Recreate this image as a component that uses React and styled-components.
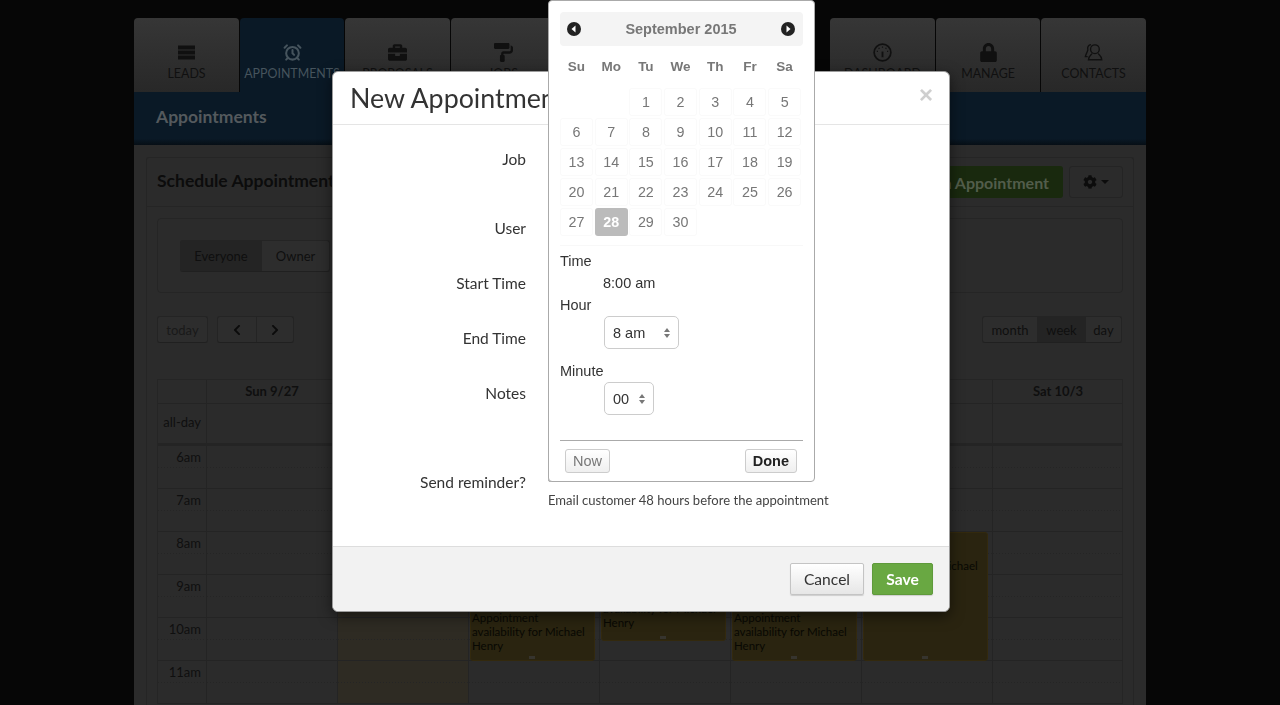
import React from 'react';
import styled, { createGlobalStyle } from 'styled-components';
import { FaBriefcase, FaPaintRoller, FaLock, FaCog, FaChevronLeft, FaChevronRight } from 'react-icons/fa';
import { LuAlarmClock } from 'react-icons/lu';

const GlobalStyle = createGlobalStyle`
  html, body {
    margin: 0;
    height: 100%;
    overflow: hidden;
    background: #060606;
    font-family: Lato, "Liberation Sans", sans-serif;
  }
  * { box-sizing: border-box; }
`;

const Shell = styled.div`
  width: 1012px;
  height: 705px;
  margin: 0 auto;
  padding-top: 18px;
  overflow: hidden;
`;

const Nav = styled.nav`
  display: flex;
  justify-content: space-between;
  height: 74px;
`;

const TabGroup = styled.div`
  display: flex;
  gap: 1px;
`;

const Tab = styled.div`
  width: 105px;
  height: 74px;
  padding-top: 25px;
  border-radius: 4px 4px 0 0;
  display: flex;
  flex-direction: column;
  align-items: center;
  gap: 4px;
  font-size: 12.4px;
  line-height: 16px;
  white-space: nowrap;
  color: ${p => (p.$active ? '#46545d' : '#101010')};
  background: ${p => (p.$active ? '#0a1926' : 'linear-gradient(#363636, #282828)')};
  &:nth-child(even) { width: 104px; }
  svg { width: 19px; height: 19px; display: block; }
`;

const Band = styled.div`
  height: 53px;
  padding: 0 22px 4px;
  display: flex;
  align-items: center;
  font-size: 17.5px;
  font-weight: 700;
  color: #54595d;
  background: linear-gradient(#0a1926 88%, #060e15);
`;

const Page = styled.div`
  height: 560px;
  padding: 12px 12px 0;
  background: #2b2b2b;
`;

const Panel = styled.div`
  height: 100%;
  border: 1px solid #252525;
  border-bottom: 0;
  border-radius: 3px 3px 0 0;
`;

const PanelHead = styled.div`
  height: 49px;
  padding: 7px 10px;
  display: flex;
  align-items: center;
  gap: 6px;
  border-bottom: 1px solid #252525;
`;

const PanelTitle = styled.h2`
  flex: 1;
  margin: 0 0 4px;
  font-size: 17.5px;
  font-weight: 700;
  color: #0c0c0c;
`;

const AddButton = styled.div`
  height: 32px;
  padding: 0 14px;
  display: flex;
  align-items: center;
  border-radius: 3px;
  font-size: 16px;
  font-weight: 700;
  color: #525d4b;
  background: #19290e;
`;

const GearButton = styled.div`
  width: 54px;
  height: 32px;
  display: flex;
  align-items: center;
  justify-content: center;
  gap: 4px;
  border: 1px solid #242424;
  border-radius: 3px;
  color: #0c0c0c;
  svg { width: 14px; height: 14px; }
`;

const Caret = styled.span`
  width: 0;
  height: 0;
  border-left: 4px solid transparent;
  border-right: 4px solid transparent;
  border-top: 4px solid #0c0c0c;
`;

const PanelBody = styled.div`
  padding: 11px 10px 0;
`;

const Well = styled.div`
  height: 75px;
  padding: 21px 22px;
  border: 1px solid #252525;
  border-radius: 4px;
`;

const Toolbar = styled.div`
  margin: 23px 1px 36px 0;
  height: 27px;
  display: flex;
  align-items: center;
  gap: 9px;
`;

const BtnGroup = styled.div`
  display: flex;
  width: fit-content;
  height: ${p => p.$height || 27}px;
  border: 1px solid #242424;
  border-bottom-color: #202020;
  border-radius: 3px;
  background: #2d2d2d;
  margin-left: ${p => (p.$push ? 'auto' : 0)};
`;

const GroupBtn = styled.div`
  width: ${p => p.$width}px;
  display: flex;
  align-items: center;
  justify-content: center;
  font-size: 13px;
  color: ${p => (p.$faded ? '#191919' : '#0f0f0f')};
  background: ${p => (p.$active ? '#242424' : 'transparent')};
  & + & { border-left: 1px solid #242424; }
  svg { width: 12px; height: 12px; color: #0b0b0b; }
`;

const Calendar = styled.div`
  width: 966px;
  border: 1px solid #252525;
  border-bottom: 0;
`;

const CalRow = styled.div`
  display: grid;
  grid-template-columns: 48px repeat(7, 131px);
  height: ${p => p.$height}px;
  border-bottom: ${p => p.$thick ? '3px' : '1px'} solid #242424;
`;

const CalCell = styled.div`
  display: flex;
  align-items: center;
  justify-content: ${p => (p.$head ? 'center' : 'flex-end')};
  padding: 0 ${p => (p.$head ? 0 : 5)}px ${p => (p.$head ? 2 : 3)}px 0;
  border-left: ${p => (p.$first ? 0 : '1px solid #242424')};
  font-size: 13px;
  font-weight: ${p => (p.$head ? 700 : 400)};
  color: #0f0f0f;
`;

const SlotGrid = styled.div`
  display: grid;
  grid-template-columns: 48px repeat(7, 131px);
`;

const TimeCol = styled.div`
  display: flex;
  flex-direction: column;
`;

const halfHourLine = 'repeating-linear-gradient(90deg, #252525 0 1px, transparent 1px 3px) 0 21px / 100% 1px no-repeat';

const TimeSlot = styled.div`
  height: 43px;
  padding: 2px 5px 0 0;
  text-align: right;
  font-size: 13px;
  line-height: 18px;
  color: #0f0f0f;
  border-bottom: 1px solid #242424;
  background: ${halfHourLine};
`;

const DayCol = styled.div`
  position: relative;
  border-left: 1px solid #242424;
  background: ${p => (p.$today ? '#2e2b23' : 'transparent')};
`;

const DaySlot = styled.div`
  height: 43px;
  border-bottom: 1px solid #242424;
  background: ${halfHourLine};
`;

const CalEvent = styled.div`
  position: absolute;
  left: 1px;
  right: 4px;
  top: ${p => p.$top}px;
  height: ${p => p.$height}px;
  display: flex;
  flex-direction: column;
  justify-content: ${p => (p.$mid ? 'flex-start' : 'flex-end')};
  padding: ${p => (p.$mid ? '12px' : '0')} 1px ${p => p.$pad || 7}px;
  border: 1px solid #33290d;
  border-radius: 3px;
  background: #2a2410;
  font-size: 11.5px;
  line-height: 14px;
  color: #080803;
  &::after {
    content: '';
    position: absolute;
    left: 47%;
    bottom: 1px;
    width: 6px;
    height: 3px;
    background: #36342e;
  }
`;

/* modal */
const Modal = styled.div`
  position: fixed;
  top: 71px;
  left: 332px;
  width: 618px;
  height: 541px;
  display: flex;
  flex-direction: column;
  background: #fff;
  border: 1px solid #9c9c9c;
  border-radius: 6px;
  box-shadow: 0 4px 14px rgba(0, 0, 0, 0.5);
`;

const ModalHead = styled.div`
  height: 53px;
  padding: 0 17px;
  display: flex;
  align-items: center;
  justify-content: space-between;
  border-bottom: 1px solid #e5e5e5;
`;

const ModalTitle = styled.h3`
  margin: 0;
  font-size: 26.8px;
  font-weight: 400;
  color: #333;
`;

const CloseX = styled.span`
  margin: -6px -1px 0 0;
  font-family: "Liberation Sans", sans-serif;
  font-size: 24px;
  font-weight: 700;
  color: #cfcfcf;
`;

const ModalBody = styled.div`
  flex: 1;
  padding-top: 24px;
`;

const FormRow = styled.div`
  display: grid;
  grid-template-columns: 193px 1fr;
  column-gap: 22px;
  height: ${p => p.$height}px;
`;

const FieldLabel = styled.label`
  text-align: right;
  font-size: 15.5px;
  line-height: 20px;
  color: #333;
`;

const Checkbox = styled.span`
  display: block;
  width: 13px;
  height: 14px;
  margin: -4px 0 9px;
  border: 1px solid #aaa;
  border-radius: 2px;
`;

const HelpText = styled.div`
  font-size: 13.05px;
  line-height: 18px;
  color: #444;
`;

const ModalFoot = styled.div`
  height: 65px;
  padding: 16px 16px 0;
  display: flex;
  justify-content: flex-end;
  gap: 8px;
  background: #f2f2f2;
  border-top: 1px solid #ddd;
  border-radius: 0 0 6px 6px;
`;

const FootBtn = styled.div`
  width: ${p => (p.$save ? 61 : 74)}px;
  height: 32px;
  display: flex;
  align-items: center;
  justify-content: center;
  border-radius: 2px;
  font-size: 15.6px;
  font-weight: ${p => (p.$save ? 700 : 400)};
  color: ${p => (p.$save ? '#fff' : '#333')};
  background: ${p => (p.$save ? '#69a842' : 'linear-gradient(#fff, #e6e6e6)')};
  border: 1px solid ${p => (p.$save ? '#5f9a3b' : '#c4c4c4')};
  box-shadow: 0 1px 1px rgba(0, 0, 0, 0.15);
`;

/* date picker popup */
const Picker = styled.div`
  position: absolute;
  top: -72px;
  left: 215px;
  width: 267px;
  height: 482px;
  padding: 11px 11px 0;
  background: #fff;
  border: 1px solid #aaa;
  border-radius: 4px;
  font-family: "Liberation Sans", Arial, sans-serif;
  color: #333;
`;

const PickerHead = styled.div`
  height: 34px;
  padding: 0 8px 0 7px;
  display: flex;
  align-items: center;
  justify-content: space-between;
  background: #f4f4f4;
  border-radius: 4px;
  font-size: 14.5px;
  font-weight: 700;
  color: #777;
`;

const DayGrid = styled.div`
  display: grid;
  grid-template-columns: repeat(7, 33px);
  column-gap: 1.7px;
`;

const WeekDay = styled.div`
  height: 20px;
  margin: 11px 0 11px;
  line-height: 20px;
  text-align: center;
  font-size: 13.5px;
  font-weight: 700;
  color: #777;
`;

const Day = styled.div`
  height: 28px;
  margin-bottom: 2px;
  line-height: 28px;
  text-align: center;
  font-size: 14.3px;
  font-weight: ${p => (p.$selected ? 700 : 400)};
  border-radius: 3px;
  color: ${p => (p.$selected ? '#fff' : '#777')};
  background: ${p => (p.$selected ? '#bbb' : 'transparent')};
  box-shadow: ${p => (p.$empty || p.$selected ? 'none' : 'inset 0 0 0 1px #fafafa')};
`;

const TimeSection = styled.div`
  margin-top: 7px;
  padding-top: 5px;
  border-top: 1px solid #f8f8f8;
`;

const TimeLabel = styled.div`
  height: 20px;
  line-height: 20px;
  font-size: 14.5px;
  margin-top: ${p => p.$gap || 0}px;
`;

const TimeValue = styled(TimeLabel)`
  padding-left: 43px;
`;

const SelectBox = styled.div`
  width: ${p => p.$width}px;
  height: 33px;
  margin: 1px 0 12px 44px;
  padding: 0 8px;
  display: flex;
  align-items: center;
  justify-content: space-between;
  border: 1px solid #ccc;
  border-radius: 5px;
  font-size: 14.5px;
`;

const Stepper = styled.span`
  display: flex;
  flex-direction: column;
  gap: 2px;
  &::before, &::after {
    content: '';
    width: 0;
    height: 0;
    border-left: 3px solid transparent;
    border-right: 3px solid transparent;
  }
  &::before { border-bottom: 4px solid #777; }
  &::after { border-top: 4px solid #777; }
`;

const PickerFoot = styled.div`
  margin-top: 25px;
  padding: 8px 6px 0 5px;
  display: flex;
  justify-content: space-between;
  border-top: 1px solid #aaa;
`;

const PickerBtn = styled.div`
  height: 24px;
  padding: 0 7px;
  display: flex;
  align-items: center;
  border: 1px solid #ccc;
  border-radius: 3px;
  font-size: 14.5px;
  font-weight: ${p => (p.$primary ? 700 : 400)};
  color: ${p => (p.$primary ? '#222' : '#777')};
  background: linear-gradient(#fff, #efefef);
`;

function ArrowDot({ dir }) {
  return (
    <svg width="14" height="14" viewBox="0 0 14 14">
      <circle cx="7" cy="7" r="7" fill="#222" />
      <path d={dir === 'left' ? 'M8.5 3.5 4.5 7l4 3.5z' : 'M5.5 3.5 9.5 7l-4 3.5z'} fill="#fff" />
    </svg>
  );
}

function StackIcon() {
  return (
    <svg viewBox="0 0 19 19" fill="currentColor">
      <rect x="1" y="2.5" width="17" height="4" />
      <rect x="1" y="7.5" width="17" height="4" />
      <rect x="1" y="12.5" width="17" height="4" />
    </svg>
  );
}

function GaugeIcon() {
  return (
    <svg viewBox="0 0 20 20" fill="none" stroke="currentColor">
      <circle cx="10" cy="10" r="8.8" strokeWidth="1.8" />
      <path d="M10 9v6" strokeWidth="2" />
      <path d="M10 3.6v1.4M6 5l.7 1.2M14 5l-.7 1.2M4 8.8h1.2M14.8 8.8H16" strokeWidth="1.2" />
    </svg>
  );
}

function ContactsIcon() {
  return (
    <svg viewBox="0 0 20 20" fill="none" stroke="currentColor" strokeWidth="1.4">
      <circle cx="11.5" cy="6.5" r="4.6" />
      <path d="M8.5 11c-.4 1.6-3.4 2-3.8 6.6h14c-.4-4.6-3.4-5-3.8-6.6" />
      <path d="M7.4 1.8C4.5 2 3.4 4.6 4 7c.3 1.4-1.6 3.2-2.6 7.4h2.4" />
    </svg>
  );
}

const leftTabs = [
  { label: 'LEADS', icon: <StackIcon /> },
  { label: 'APPOINTMENTS', icon: <LuAlarmClock strokeWidth={2.6} />, active: true },
  { label: 'PROPOSALS', icon: <FaBriefcase /> },
  { label: 'JOBS', icon: <FaPaintRoller /> },
];

const rightTabs = [
  { label: 'DASHBOARD', icon: <GaugeIcon /> },
  { label: 'MANAGE', icon: <FaLock /> },
  { label: 'CONTACTS', icon: <ContactsIcon /> },
];

const dayHeads = ['Sun 9/27', 'Mon 9/28', 'Tue 9/29', 'Wed 9/30', 'Thu 10/1', 'Fri 10/2', 'Sat 10/3'];
const hours = ['6am', '7am', '8am', '9am', '10am', '11am'];
const slotCount = hours.length;

const eventText = ['Appointment', 'availability for Michael', 'Henry'];

// top/height are relative to the 6am line
const events = {
  2: { top: 86, height: 129 },
  3: { top: 86, height: 109, pad: 10 },
  4: { top: 86, height: 129 },
  5: { top: 86, height: 129, mid: true },
};

const weekNames = ['Su', 'Mo', 'Tu', 'We', 'Th', 'Fr', 'Sa'];
const leadingBlanks = 2;
const daysInMonth = 30;

function App() {
  return (
    <>
      <GlobalStyle />
      <Shell>
        <Nav>
          <TabGroup>
            {leftTabs.map(t => (
              <Tab key={t.label} $active={t.active}>{t.icon}{t.label}</Tab>
            ))}
          </TabGroup>
          <TabGroup>
            {rightTabs.map(t => (
              <Tab key={t.label}>{t.icon}{t.label}</Tab>
            ))}
          </TabGroup>
        </Nav>
        <Band>Appointments</Band>
        <Page>
          <Panel>
            <PanelHead>
              <PanelTitle>Schedule Appointment</PanelTitle>
              <AddButton>Add an Appointment</AddButton>
              <GearButton><FaCog /><Caret /></GearButton>
            </PanelHead>
            <PanelBody>
              <Well>
                <BtnGroup $height={32}>
                  <GroupBtn $width={80} $active>Everyone</GroupBtn>
                  <GroupBtn $width={68}>Owner</GroupBtn>
                </BtnGroup>
              </Well>
              <Toolbar>
                <BtnGroup><GroupBtn $width={49} $faded>today</GroupBtn></BtnGroup>
                <BtnGroup>
                  <GroupBtn $width={38}><FaChevronLeft /></GroupBtn>
                  <GroupBtn $width={37}><FaChevronRight /></GroupBtn>
                </BtnGroup>
                <BtnGroup $push>
                  <GroupBtn $width={54}>month</GroupBtn>
                  <GroupBtn $width={48} $active>week</GroupBtn>
                  <GroupBtn $width={36}>day</GroupBtn>
                </BtnGroup>
              </Toolbar>
              <Calendar>
                <CalRow $height={24}>
                  <CalCell $first />
                  {dayHeads.map(d => <CalCell key={d} $head>{d}</CalCell>)}
                </CalRow>
                <CalRow $height={42} $thick>
                  <CalCell $first>all-day</CalCell>
                  {dayHeads.map(d => <CalCell key={d} />)}
                </CalRow>
                <SlotGrid>
                  <TimeCol>
                    {hours.map(h => <TimeSlot key={h}>{h}</TimeSlot>)}
                  </TimeCol>
                  {dayHeads.map((d, i) => (
                    <DayCol key={d} $today={i === 1}>
                      {Array.from({ length: slotCount }, (_, n) => <DaySlot key={n} />)}
                      {events[i] && (
                        <CalEvent
                          $top={events[i].top}
                          $height={events[i].height}
                          $mid={events[i].mid}
                          $pad={events[i].pad}
                        >
                          {eventText.map(line => <div key={line}>{line}</div>)}
                        </CalEvent>
                      )}
                    </DayCol>
                  ))}
                </SlotGrid>
              </Calendar>
            </PanelBody>
          </Panel>
        </Page>
      </Shell>

      <Modal>
        <ModalHead>
          <ModalTitle>New Appointment</ModalTitle>
          <CloseX>×</CloseX>
        </ModalHead>
        <ModalBody>
          <FormRow $height={69}><FieldLabel>Job</FieldLabel></FormRow>
          <FormRow $height={55}><FieldLabel>User</FieldLabel></FormRow>
          <FormRow $height={55}><FieldLabel>Start Time</FieldLabel></FormRow>
          <FormRow $height={55}><FieldLabel>End Time</FieldLabel></FormRow>
          <FormRow $height={89}><FieldLabel>Notes</FieldLabel></FormRow>
          <FormRow $height={60}>
            <FieldLabel>Send reminder?</FieldLabel>
            <div>
              <Checkbox />
              <HelpText>Email customer 48 hours before the appointment</HelpText>
            </div>
          </FormRow>
        </ModalBody>
        <ModalFoot>
          <FootBtn>Cancel</FootBtn>
          <FootBtn $save>Save</FootBtn>
        </ModalFoot>

        <Picker>
          <PickerHead>
            <ArrowDot dir="left" />
            September 2015
            <ArrowDot dir="right" />
          </PickerHead>
          <DayGrid>
            {weekNames.map(w => <WeekDay key={w}>{w}</WeekDay>)}
            {Array.from({ length: leadingBlanks }, (_, i) => <Day key={i} $empty />)}
            {Array.from({ length: daysInMonth }, (_, i) => (
              <Day key={i} $selected={i + 1 === 28}>{i + 1}</Day>
            ))}
          </DayGrid>
          <TimeSection>
            <TimeLabel>Time</TimeLabel>
            <TimeValue $gap={2}>8:00 am</TimeValue>
            <TimeLabel $gap={2}>Hour</TimeLabel>
            <SelectBox $width={75}>8 am<Stepper /></SelectBox>
            <TimeLabel>Minute</TimeLabel>
            <SelectBox $width={50}>00<Stepper /></SelectBox>
          </TimeSection>
          <PickerFoot>
            <PickerBtn>Now</PickerBtn>
            <PickerBtn $primary>Done</PickerBtn>
          </PickerFoot>
        </Picker>
      </Modal>
    </>
  );
}

export default App;
